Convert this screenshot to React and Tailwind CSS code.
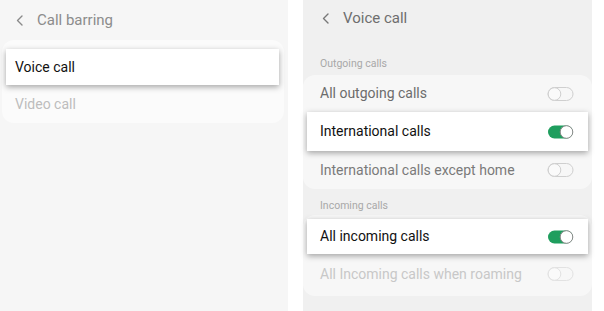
import React from 'react';

const font = { fontFamily: 'Roboto, "Liberation Sans", sans-serif' };

function Chevron({ color = '#8a8a8a' }) {
  return (
    <svg width="7" height="11" viewBox="0 0 7 11" fill="none">
      <path d="M6 1L1.5 5.5L6 10" stroke={color} strokeWidth="1.4" strokeLinecap="round" strokeLinejoin="round" />
    </svg>
  );
}

function Toggle({ on, faint }) {
  if (on) {
    return (
      <svg width="28" height="16" viewBox="0 0 28 16">
        <rect x="1" y="1.5" width="25" height="13" rx="6.5" fill="#1f9e5e" />
        <circle cx="19.5" cy="8" r="6.3" fill="#fff" stroke="#8a8a8a" strokeWidth="1" />
      </svg>
    );
  }
  const c = faint ? '#e2e2e2' : '#cfcfcf';
  return (
    <svg width="28" height="16" viewBox="0 0 28 16" fill="none">
      <rect x="1" y="1.5" width="25" height="13" rx="6.5" stroke={c} strokeWidth="1" />
      <circle cx="7.5" cy="8" r="6.3" fill="#fafafa" stroke={c} strokeWidth="1" />
    </svg>
  );
}

function Row({ label, color, h, on, faint }) {
  return (
    <div className={`flex items-center justify-between pl-[17px] pr-[17px] text-[14px] ${h}`} style={{ color }}>
      <span>{label}</span>
      <Toggle on={on} faint={faint} />
    </div>
  );
}

function Highlight({ label, h, on }) {
  return (
    <div className={`flex items-center justify-between mx-[4px] pl-[13px] pr-[13px] bg-white text-[14px] text-[#111] shadow-[0_2px_6px_rgba(0,0,0,0.35)] ${h}`}>
      <span>{label}</span>
      {on !== undefined && <Toggle on={on} />}
    </div>
  );
}

export default function App() {
  return (
    <div className="flex w-[604px] h-[311px] bg-white overflow-hidden" style={font}>
      {/* Call barring */}
      <div className="w-[288px] h-full bg-[#f6f6f6]">
        <div className="h-[40px] flex items-center pl-[16px] gap-[14px] text-[15px] text-[#8c8c8c]">
          <Chevron />
          <span>Call barring</span>
        </div>
        <div className="ml-[2px] mr-[4px] rounded-[12px] bg-[#fbfbfb] pt-[9px]">
          <div className="flex items-center ml-[4px] mr-[5px] h-[36px] pl-[9px] bg-white text-[14px] text-[#111] shadow-[0_2px_6px_rgba(0,0,0,0.35)]">
            Voice call
          </div>
          <div className="flex items-center h-[38px] pl-[13px] text-[14px] text-[#bdbdbd]">Video call</div>
        </div>
      </div>

      <div className="w-[15px]" />

      {/* Voice call */}
      <div className="w-[289px] h-full bg-[#f0f0f0]">
        <div className="h-[37px] flex items-center pl-[19px] gap-[14px] text-[15px] text-[#6e6e6e]">
          <Chevron color="#777" />
          <span>Voice call</span>
        </div>
        <div className="mt-[18px] h-[18px] flex items-center pl-[17px] text-[10.5px] text-[#a8a8a8]">Outgoing calls</div>
        <div className="mt-[2px] rounded-[12px] bg-[#f7f7f7]">
          <Row label="All outgoing calls" color="#6c6c6c" h="h-[37px]" on={false} />
          <Highlight label="International calls" h="h-[39px]" on />
          <Row label="International calls except home" color="#7a7a7a" h="h-[38px]" on={false} />
        </div>
        <div className="mt-[8px] h-[18px] flex items-center pl-[17px] text-[10.5px] text-[#a8a8a8]">Incoming calls</div>
        <div className="rounded-[12px] bg-[#f7f7f7] pt-[4px] pb-[2px]">
          <Highlight label="All incoming calls" h="h-[35px]" on />
          <Row label="All Incoming calls when roaming" color="#c8c8c8" h="h-[40px]" on={false} faint />
        </div>
      </div>
    </div>
  );
}
